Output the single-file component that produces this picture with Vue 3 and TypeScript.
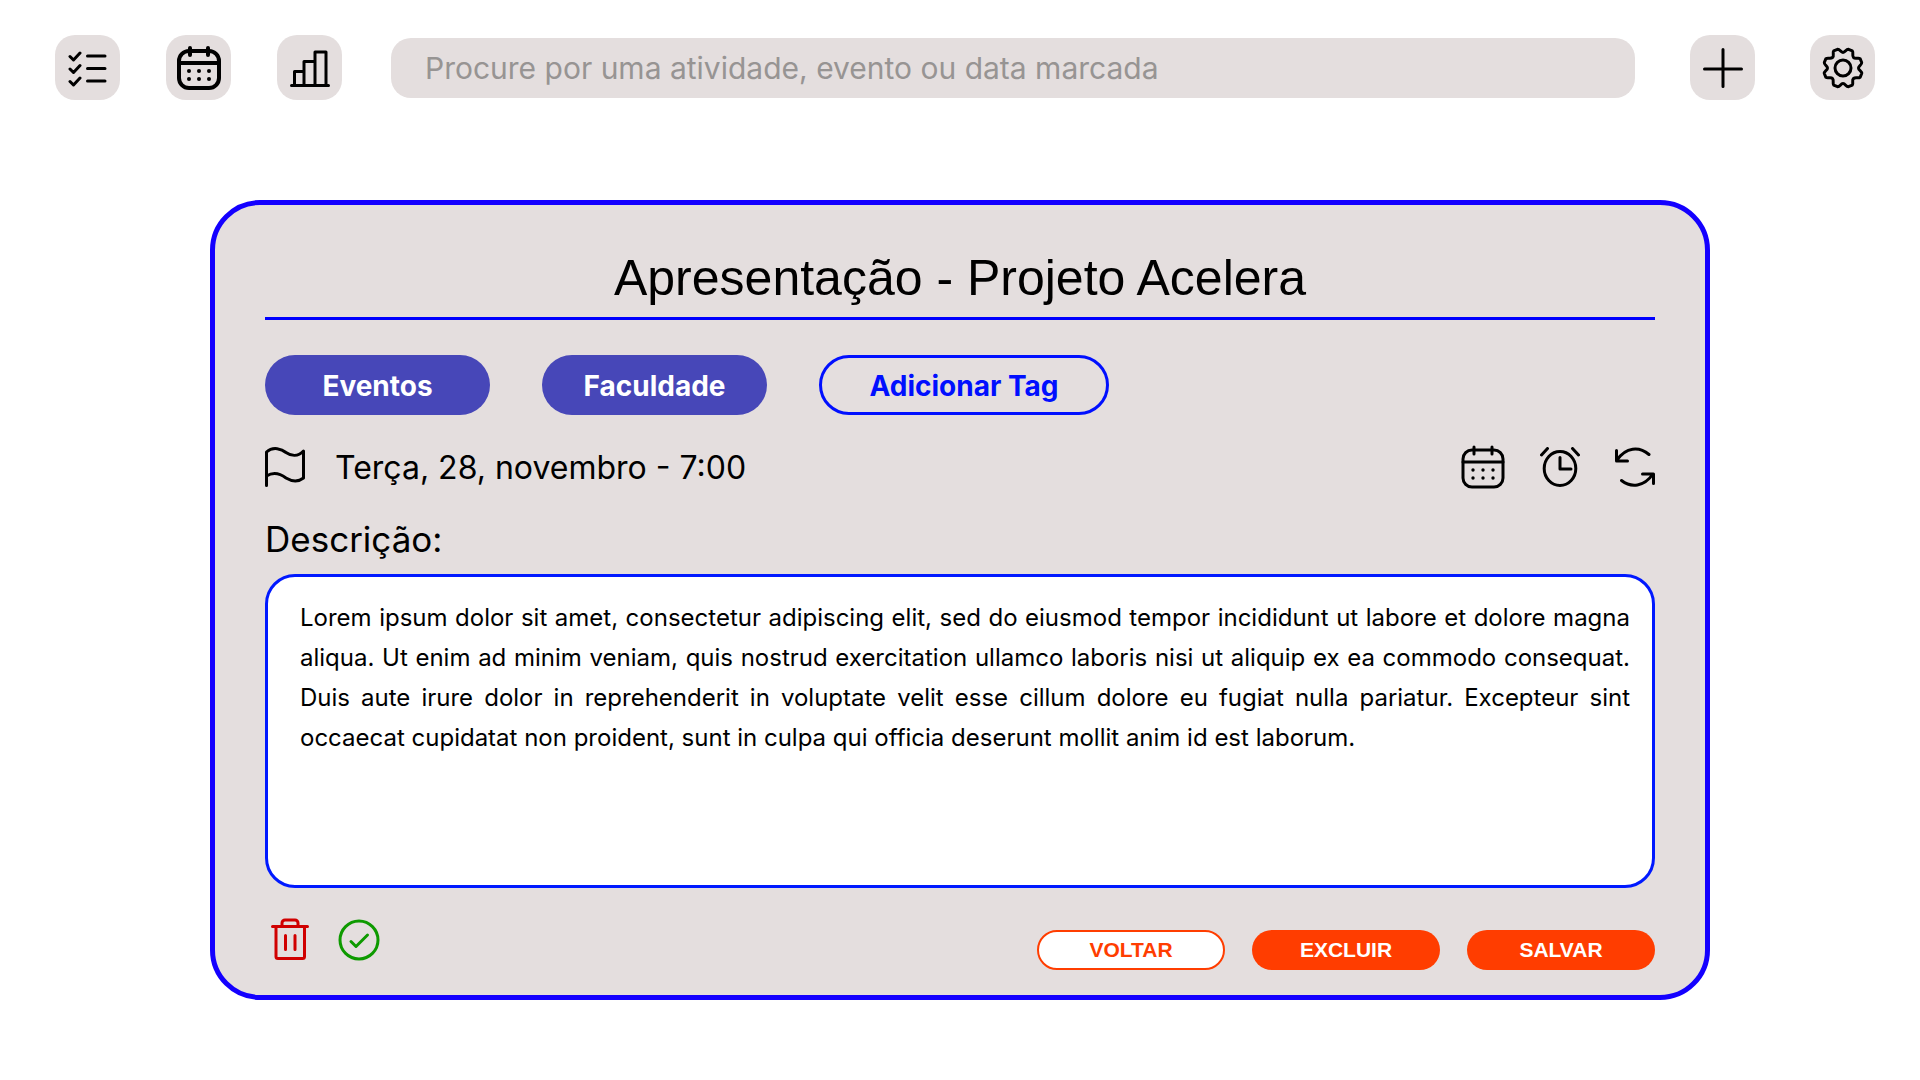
<script setup lang="ts">
import { ref } from 'vue'

const search = ref('')
const tags = ref<string[]>(['Eventos', 'Faculdade'])
const description = ref(
  'Lorem ipsum dolor sit amet, consectetur adipiscing elit, sed do eiusmod tempor incididunt ut labore et dolore magna aliqua. Ut enim ad minim veniam, quis nostrud exercitation ullamco laboris nisi ut aliquip ex ea commodo consequat. Duis aute irure dolor in reprehenderit in voluptate velit esse cillum dolore eu fugiat nulla pariatur. Excepteur sint occaecat cupidatat non proident, sunt in culpa qui officia deserunt mollit anim id est laborum.'
)
const dots = [
  [12, 26], [22, 26], [32, 26],
  [12, 34], [22, 34], [32, 34],
]
</script>

<template>
  <header class="topbar">
    <nav class="views" aria-label="Visualizações">
      <button class="tile" type="button" aria-label="Tarefas">
        <svg width="40" height="38" viewBox="0 0 40 38" class="stroke w3">
          <path d="M2 7.500l3.500 3.500L12 4M2 20l3.500 3.500L12 16.500M2 32.500L5.500 36 12 29M19.500 7h17.500M19.500 19.500h17.500M19.500 32h17.500" />
        </svg>
      </button>
      <button class="tile" type="button" aria-label="Calendário">
        <svg width="44" height="44" viewBox="0 0 44 44" class="stroke w4">
          <rect x="2" y="5" width="40" height="37" rx="10" />
          <path d="M2 17h40M13 2v7M31 2v7" />
          <circle v-for="(d, i) in dots" :key="i" class="dot" :cx="d[0]" :cy="d[1] - 1" r="2" />
        </svg>
      </button>
      <button class="tile" type="button" aria-label="Estatísticas">
        <svg width="42" height="38" viewBox="0 0 42 38" class="stroke w3">
          <path d="M2.500 36.500h37M5.500 36V22.500h9.500M15 36V12.500h11M26 36V3h11v33" />
        </svg>
      </button>
    </nav>
    <input v-model="search" class="search" type="search" aria-label="Procurar" placeholder="Procure por uma atividade, evento ou data marcada" />
    <div class="tools">
      <button class="tile" type="button" aria-label="Adicionar">
        <svg width="40" height="40" viewBox="0 0 40 40" class="stroke w3">
          <path d="M20 1.500v37M1.500 21h37" />
        </svg>
      </button>
      <button class="tile" type="button" aria-label="Configurações">
        <svg width="42" height="42" viewBox="0 0 42 42" class="stroke w3">
          <path d="M15.500 2.300C18 2 18.500 5.500 21 5.500S24 2 26.500 2.300L30.300 3.900C31.800 5.900 29.700 8.400 31.500 10.500S36.100 10.200 38.100 11.700L39.700 15.500C40 18 36.500 18.500 36.500 21S40 24 39.700 26.500L38.100 30.300C36.100 31.800 33.600 29.700 31.500 31.500S31.800 36.100 30.300 38.100L26.500 39.700C24 40 23.500 36.500 21 36.500S18 40 15.500 39.700L11.700 38.100C10.200 36.100 12.300 33.600 10.500 31.500S5.900 31.800 3.900 30.300L2.300 26.500C2 24 5.500 23.500 5.500 21S2 18 2.300 15.500L3.900 11.700C5.900 10.200 8.400 12.300 10.500 10.500S10.200 5.900 11.700 3.900Z" />
          <circle cx="21" cy="21" r="8" />
        </svg>
      </button>
    </div>
  </header>

  <main class="card">
    <h1 class="title">Apresentação - Projeto Acelera</h1>

    <div class="tags">
      <button v-for="tag in tags" :key="tag" class="tag" type="button">{{ tag }}</button>
      <button class="tag add" type="button">Adicionar Tag</button>
    </div>

    <div class="schedule">
      <button class="icon" type="button" aria-label="Prioridade">
        <svg width="40" height="40" viewBox="0 0 40 40" class="stroke w3">
          <path d="M1.500 38.500V5C8-1 17 2 21 5.500C26 9 33 10 38.500 4V31C32 36 26 34 21 31C15 26.500 8 25 1.500 29" />
        </svg>
      </button>
      <time class="date">Terça, 28, novembro - 7:00</time>
      <div class="options">
        <button class="icon" type="button" aria-label="Data">
          <svg width="44" height="44" viewBox="0 0 44 44" class="stroke w3">
            <rect x="2" y="5" width="40" height="37" rx="9" />
            <path d="M2 17h40M13 2v7M31 2v7" />
            <circle v-for="(d, i) in dots" :key="i" class="dot" :cx="d[0]" :cy="d[1] - 1" r="1.700" />
          </svg>
        </button>
        <button class="icon" type="button" aria-label="Lembrete">
          <svg width="40" height="40" viewBox="0 0 40 40" class="stroke w3">
            <ellipse cx="20" cy="21.500" rx="15.800" ry="17" />
            <path d="M20 10.500v11.500h11M1.500 8L7.500 1.500M38.500 8L32.500 1.500" />
          </svg>
        </button>
        <button class="icon" type="button" aria-label="Repetir">
          <svg width="40" height="40" viewBox="0 0 40 40" class="stroke w3">
            <path d="M34 7.500C24-1 11 0 2 13M1.500 3.500v10.500h11M6.500 33.500C16 41 29 40 38 27M38.500 36.500V27H27.500" />
          </svg>
        </button>
      </div>
    </div>

    <label class="label" for="descricao">Descrição:</label>
    <textarea id="descricao" v-model="description" class="description" spellcheck="false"></textarea>

    <footer class="actions">
      <div class="status">
        <button class="icon danger" type="button" aria-label="Apagar">
          <svg width="38" height="44" viewBox="0 0 38 44" class="stroke w3">
            <path d="M1.500 8.500h35M5 8.500V38.500a2 2 0 0 0 2 2H31.500a2 2 0 0 0 2-2V8.500M11 8V5a3 3 0 0 1 3-3H24a3 3 0 0 1 3 3V8M14.500 17.500V31.500M24 17.500V31.500" />
          </svg>
        </button>
        <button class="icon done" type="button" aria-label="Concluir">
          <svg width="42" height="42" viewBox="0 0 42 42" class="stroke w3">
            <circle cx="21" cy="21" r="19" />
            <path d="M13 22.500L18 27.500L29.500 16" />
          </svg>
        </button>
      </div>
      <div class="buttons">
        <button class="action back" type="button">VOLTAR</button>
        <button class="action" type="button">EXCLUIR</button>
        <button class="action" type="button">SALVAR</button>
      </div>
    </footer>
  </main>
</template>

<style>
body {
  background: #fff;
}
</style>

<style scoped>
* {
  box-sizing: border-box;
}

button {
  padding: 0;
  border: 0;
  background: none;
  color: #000;
  cursor: pointer;
}

svg {
  display: block;
}

.stroke {
  fill: none;
  stroke: currentColor;
  stroke-linecap: round;
  stroke-linejoin: round;
}

.w3 {
  stroke-width: 3;
}

.w4 {
  stroke-width: 4;
}

.dot {
  fill: currentColor;
  stroke: none;
}

.topbar {
  display: flex;
  align-items: center;
  gap: 49px;
  padding: 35px 45px 0 55px;
}

.views {
  display: flex;
  gap: 46px;
}

.tools {
  display: flex;
  gap: 55px;
  margin-left: 6px;
}

.tile {
  display: flex;
  align-items: center;
  justify-content: center;
  width: 65px;
  height: 65px;
  border-radius: 20px;
  background: #e4dede;
}

.search {
  flex: 1;
  min-width: 0;
  height: 60px;
  padding: 0 34px;
  border: 0;
  border-radius: 20px;
  background: #e4dede;
  color: #000;
  font: 400 30px Inter, sans-serif;
  appearance: none;
}

.search::placeholder {
  color: #979493;
  opacity: 1;
}

.card {
  max-width: 1500px;
  margin: 100px auto 80px;
  padding: 45px 50px 25px;
  border: 5px solid #1400ff;
  border-radius: 50px;
  background: #e4dede;
}

.title {
  margin: 0;
  padding-bottom: 11px;
  border-bottom: 3px solid #00f;
  font: 400 50px/56px "Liberation Sans", sans-serif;
  text-align: center;
}

.tags {
  display: flex;
  flex-wrap: wrap;
  gap: 52px;
  margin-top: 35px;
}

.tag {
  min-width: 225px;
  height: 60px;
  padding: 2px 36px 0;
  border-radius: 30px;
  background: #4747b8;
  color: #fff;
  font: 700 28px Inter, sans-serif;
}

.tag.add {
  min-width: 290px;
  border: 3px solid #000fff;
  background: none;
  color: #000fff;
}

.schedule {
  display: flex;
  align-items: center;
  margin-top: 30px;
}

.date {
  margin-left: 30px;
  padding-top: 2px;
  font: 400 32px/42px Inter, sans-serif;
}

.options {
  display: flex;
  align-items: center;
  gap: 35px;
  margin-left: auto;
}

.label {
  display: block;
  margin: 28px 0 13px;
  font: 400 35px/44px Inter, sans-serif;
}

.description {
  display: block;
  width: 100%;
  height: 314px;
  padding: 21px 22px 21px 32px;
  border: 3px solid #0019ff;
  border-radius: 30px;
  outline: none;
  background: #fff;
  color: #000;
  font: 400 24px/40px Inter, sans-serif;
  text-align: justify;
  resize: none;
}

.actions {
  display: flex;
  justify-content: space-between;
  margin-top: 30px;
}

.status {
  display: flex;
  align-items: center;
  gap: 29px;
  height: 44px;
  margin-left: 6px;
}

.danger {
  color: #d00000;
}

.done {
  color: #0e9a00;
}

.buttons {
  display: flex;
  gap: 27px;
  padding-top: 12px;
}

.action {
  width: 188px;
  height: 40px;
  border-radius: 20px;
  background: #ff3d00;
  color: #fff;
  font: 700 21px "Liberation Sans", sans-serif;
}

.action.back {
  border: 2px solid #ff3d00;
  background: #fff;
  color: #ff3d00;
}
</style>
